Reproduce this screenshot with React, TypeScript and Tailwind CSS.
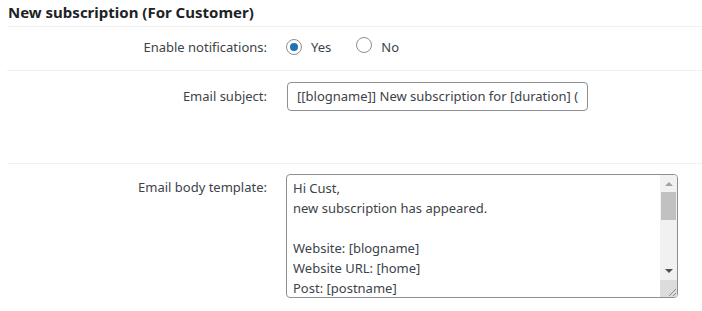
import React from "react";

function Radio({ checked }: { checked: boolean }) {
  return (
    <span className="inline-flex h-4 w-4 items-center justify-center rounded-full border border-[#8c8f94] bg-white">
      {checked && <span className="h-2 w-2 rounded-full bg-[#2271b1]" />}
    </span>
  );
}

export default function App() {
  const body = [
    "Hi Cust,",
    "new subscription has appeared.",
    "",
    "Website: [blogname]",
    "Website URL: [home]",
    "Post: [postname]",
  ];
  return (
    <div
      className="w-[702px] h-[311px] bg-white text-[#3c434a] text-[13px] leading-[20px]"
      style={{ fontFamily: '"Noto Sans", "Open Sans", sans-serif' }}
    >
      <div className="ml-[7px] flex h-[27px] items-center border-b border-[#f0f0f0] pl-[1px] pb-[2px] text-[15px] font-bold text-[#1d2327]">
        New subscription (For Customer)
      </div>

      <div className="ml-[7px] flex h-[44px] border-b border-[#f0f0f0] pt-[10px]">
        <div className="w-[260px] text-right">Enable notifications:</div>
        <div className="ml-[19px] flex h-[20px] items-center">
          <Radio checked />
          <span className="ml-[9px]">Yes</span>
          <span className="ml-[25px]"><Radio checked={false} /></span>
          <span className="ml-[9px]">No</span>
        </div>
      </div>

      <div className="ml-[7px] flex h-[93px] border-b border-[#f0f0f0] pt-[11px]">
        <div className="w-[260px] pt-[4px] text-right">Email subject:</div>
        <div className="ml-[20px] h-[29px] w-[301px] rounded-[4px] border border-[#8c8f94] px-[9px] pt-[3px]">
          <div className="overflow-hidden whitespace-nowrap">
            [[blogname]] New subscription for [duration] (
          </div>
        </div>
      </div>

      <div className="ml-[7px] flex pt-[10px]">
        <div className="w-[260px] pt-[3px] text-right">Email body template:</div>
        <div className="ml-[19px] flex h-[124px] w-[392px] overflow-hidden rounded-[4px] border border-[#8c8f94]">
          <div className="flex-1 overflow-hidden pl-[6px] pt-[3px]">
            {body.map((l, i) => (
              <div key={i} className="h-[20px] whitespace-nowrap">
                {l}
              </div>
            ))}
          </div>
          <div className="flex w-[17px] flex-col bg-[#f1f1f1]">
            <div className="flex h-[17px] items-center justify-center">
              <svg width="8" height="5" viewBox="0 0 8 5">
                <path d="M0 5 L4 1 L8 5 Z" fill="#a3a3a3" />
              </svg>
            </div>
            <div className="mx-[1px] h-[28px] bg-[#c1c1c1]" />
            <div className="flex-1" />
            <div className="flex h-[17px] items-center justify-center">
              <svg width="8" height="5" viewBox="0 0 8 5">
                <path d="M0 0 L8 0 L4 4 Z" fill="#505050" />
              </svg>
            </div>
            <div className="relative h-[17px] bg-[#dcdcdc]">
              <svg className="absolute bottom-0 right-0" width="10" height="10" viewBox="0 0 10 10">
                <path d="M9 2 L2 9 M9 6 L6 9" stroke="#8a8a8a" strokeWidth="1" />
              </svg>
            </div>
          </div>
        </div>
      </div>
    </div>
  );
}
